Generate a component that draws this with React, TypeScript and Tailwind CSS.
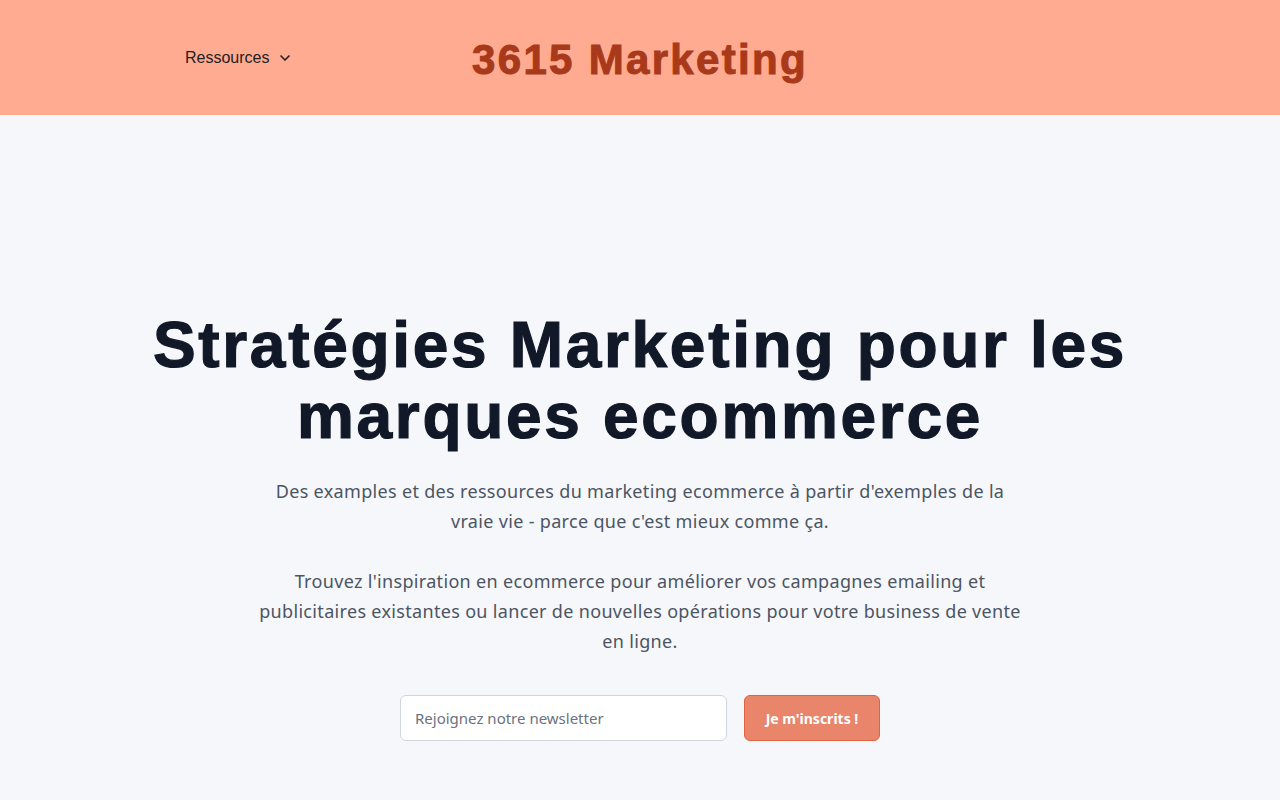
import { ChevronDown } from "lucide-react";

export default function App() {
  return (
    <div className="min-h-screen bg-[#f6f7fb]" style={{ fontFamily: "'Noto Sans', sans-serif" }}>
      <header className="h-[115px] bg-[#ffab91] flex items-center">
        <div className="w-full relative flex items-center justify-center">
          <button className="absolute left-[185px] top-1/2 -translate-y-1/2 flex items-center gap-2 text-[16px] text-[#222] font-['Liberation_Sans',sans-serif]">
            Ressources
            <ChevronDown className="w-4 h-4" strokeWidth={2.5} />
          </button>
          <h1 className="text-[42px] font-bold text-[#a8391a] tracking-[0.055em] [-webkit-text-stroke:1px_#a8391a] font-['Liberation_Sans',sans-serif] pt-1">
            3615 Marketing
          </h1>
        </div>
      </header>

      <main className="flex flex-col items-center pt-[195px] px-8">
        <h2 className="text-center text-[64px] leading-[71px] font-bold text-[#111827] tracking-[0.042em] [-webkit-text-stroke:1.2px_#111827] font-['Liberation_Sans',sans-serif]">
          Stratégies Marketing pour les
          <br />
          marques ecommerce
        </h2>
        <p className="mt-6 max-w-[768px] text-center text-[18px] leading-[30px] tracking-[0.018em] text-[#4b5563]">
          Des examples et des ressources du marketing ecommerce à partir d'exemples de la vraie vie - parce que c'est mieux comme ça.
        </p>
        <p className="mt-[30px] max-w-[768px] text-center text-[18px] leading-[30px] tracking-[0.018em] text-[#4b5563]">
          Trouvez l'inspiration en ecommerce pour améliorer vos campagnes emailing et publicitaires existantes ou lancer de nouvelles opérations pour votre business de vente en ligne.
        </p>
        <form className="mt-[39px] flex gap-[17px]" onSubmit={(e) => e.preventDefault()}>
          <input
            type="email"
            placeholder="Rejoignez notre newsletter"
            className="w-[327px] h-[46px] px-[14px] rounded-md border border-gray-300 bg-white text-[15px] placeholder:text-[#6b7280]"
          />
          <button
            type="submit"
            className="w-[136px] h-[46px] rounded-md bg-[#e8856a] border border-[#e0623f] text-white text-[14px] font-bold"
          >
            Je m'inscrits !
          </button>
        </form>
      </main>
    </div>
  );
}
